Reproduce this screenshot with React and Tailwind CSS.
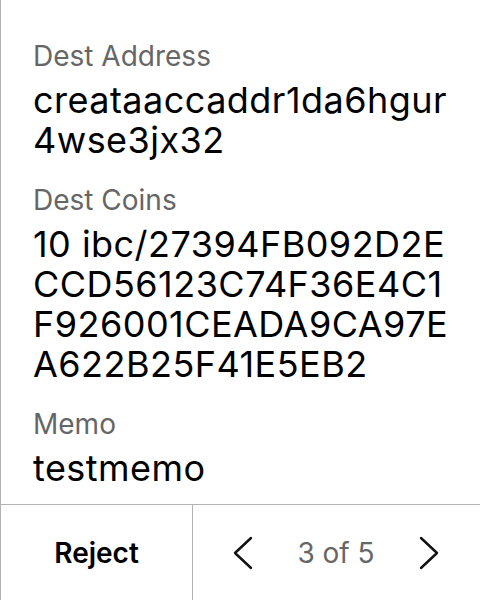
import React from 'react';

const Field = ({ label, lines }) => (
  <div className="flex flex-col gap-2">
    <div className="text-[28px] leading-[32px] text-[#666666]">{label}</div>
    <div className="text-[36px] leading-[40px] tracking-[0.013em] text-black">
      {lines.map((line) => (
        <div key={line}>{line}</div>
      ))}
    </div>
  </div>
);

const Chevron = ({ dir }) => (
  <svg width="20" height="34" viewBox="0 0 20 34" fill="none" stroke="#111" strokeWidth="2.4" strokeLinecap="round" strokeLinejoin="round">
    {dir === 'left' ? <path d="M18 2 L2 17 L18 32" /> : <path d="M2 2 L18 17 L2 32" />}
  </svg>
);

export default function App() {
  return (
    <div className="w-[480px] h-[600px] bg-white flex flex-col border-l border-[#b3b3b3]" style={{ fontFamily: 'Inter, "Noto Sans", sans-serif' }}>
      <div className="flex-1 flex flex-col gap-6 pt-10 pl-[32px] pr-4">
        <Field label="Dest Address" lines={['creataaccaddr1da6hgur', '4wse3jx32']} />
        <Field
          label="Dest Coins"
          lines={['10 ibc/27394FB092D2E', 'CCD56123C74F36E4C1', 'F926001CEADA9CA97E', 'A622B25F41E5EB2']}
        />
        <Field label="Memo" lines={['testmemo']} />
      </div>
      <div className="h-[96px] flex border-t border-[#b3b3b3]">
        <div className="w-[192px] flex items-center justify-center text-[28px] font-semibold text-black border-r border-[#b3b3b3]">
          Reject
        </div>
        <div className="flex-1 flex items-center justify-between pl-10 pr-[41px]">
          <Chevron dir="left" />
          <span className="text-[28px] text-[#666666]">3 of 5</span>
          <Chevron dir="right" />
        </div>
      </div>
    </div>
  );
}
